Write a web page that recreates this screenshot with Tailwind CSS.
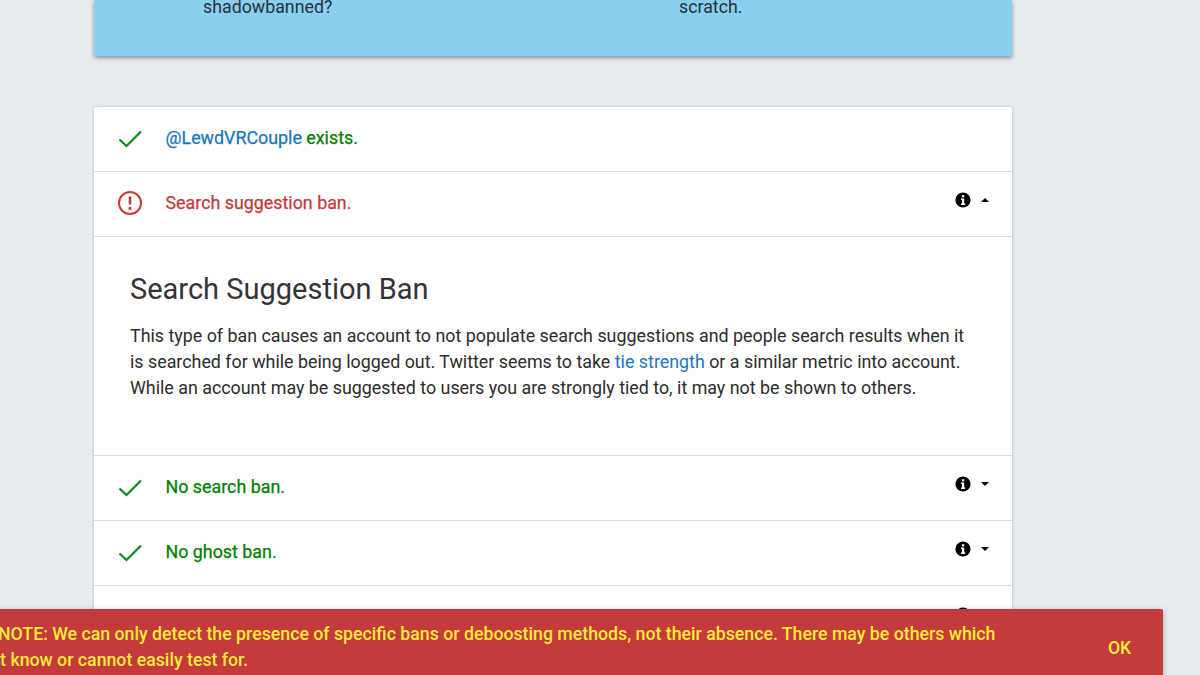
<!DOCTYPE html>
<html lang="en">
<head>
    <meta charset="UTF-8">
    <title>Shadowban Test</title>
    <script src="https://cdn.jsdelivr.net/npm/@tailwindcss/browser@4"></script>
</head>
<body class="relative h-[675px] w-[1200px] overflow-hidden bg-[#e6ebf0] font-['Roboto',sans-serif] text-[#2c2c2c]">
    <div class="ml-[94px] w-[918px]">
        <!-- Intro -->
        <div class="grid h-[56px] grid-cols-2 rounded-b-[2px] bg-[#89cff0] text-[17.8px] leading-[26px] text-[#263238] shadow-[0_2px_4px_rgba(0,0,0,0.4)]">
            <p class="-mt-[6px] pl-[109px]">shadowbanned?</p>
            <p class="-mt-[6px] pl-[126px]">scratch.</p>
        </div>

        <!-- Results -->
        <div class="mt-[51px] rounded-[2px] bg-white shadow-[0_0_3px_rgba(0,0,0,0.25)]">
            <!-- Exists -->
            <div class="flex h-[65px] items-center border-b border-[#dcdcdc] pb-[2px] pl-[24px] text-[17.85px] text-[#008000]">
                <svg class="mr-[23.5px] h-[24px] w-[24px]" viewBox="0 0 24 24" fill="none" stroke="#0a8a1f" stroke-width="2.2"><path d="M1.5 13.5 8.5 20 23 5.5"/></svg>
                <p class="[-webkit-text-stroke:0.25px_currentColor]"><span class="text-[#1b75bb]">@LewdVRCouple</span> exists.</p>
            </div>

            <!-- Search suggestion ban -->
            <div class="flex h-[65px] items-center border-b border-[#dcdcdc] pb-[2px] pl-[24px] pr-[22px] text-[17.85px] text-[#c53a3a]">
                <svg class="mr-[23.5px] h-[24px] w-[24px]" viewBox="0 0 24 24" fill="none" stroke="#c53a3a" stroke-width="2"><circle cx="12" cy="12" r="11"/><path stroke-width="2.6" d="M12 5.5v8"/><path stroke-width="2.8" d="M12 16v2.8"/></svg>
                <p class="[-webkit-text-stroke:0.25px_currentColor]">Search suggestion ban.</p>
                <div class="-mt-[6px] ml-auto flex items-center gap-[9px]">
                    <svg class="h-[16px] w-[16px]" viewBox="0 0 16 16"><circle cx="8" cy="8" r="7.6" fill="#000"/><rect x="6.9" y="3.2" width="2.3" height="2.2" fill="#fff"/><path fill="#fff" d="M6 6.6h3.2v5h1v1.3H6v-1.3h1v-3.7H6z"/></svg>
                    <svg class="h-[4px] w-[10px]" viewBox="0 0 10 4"><path d="M1 4 5 0l4 4z"/></svg>
                </div>
            </div>

            <!-- Search suggestion ban details -->
            <div class="h-[219px] border-b border-[#dcdcdc] px-[36px] pt-[33px]">
                <h2 class="text-[29px] leading-[38px] text-[#333]">Search Suggestion Ban</h2>
                <p class="mt-[15px] whitespace-nowrap text-[17.85px] leading-[26px] text-[#2c2c2c]">
                    This type of ban causes an account to not populate search suggestions and people search results when it<br>
                    is searched for while being logged out. Twitter seems to take <a class="text-[#1b75bb]">tie strength</a> or a similar metric into account.<br>
                    While an account may be suggested to users you are strongly tied to, it may not be shown to others.
                </p>
            </div>

            <!-- No search ban -->
            <div class="flex h-[65px] items-center border-b border-[#dcdcdc] pb-[2px] pl-[24px] pr-[22px] text-[17.85px] text-[#008000]">
                <svg class="mr-[23.5px] h-[24px] w-[24px]" viewBox="0 0 24 24" fill="none" stroke="#0a8a1f" stroke-width="2.2"><path d="M1.5 13.5 8.5 20 23 5.5"/></svg>
                <p class="[-webkit-text-stroke:0.25px_currentColor]">No search ban.</p>
                <div class="-mt-[6px] ml-auto flex items-center gap-[9px]">
                    <svg class="h-[16px] w-[16px]" viewBox="0 0 16 16"><circle cx="8" cy="8" r="7.6" fill="#000"/><rect x="6.9" y="3.2" width="2.3" height="2.2" fill="#fff"/><path fill="#fff" d="M6 6.6h3.2v5h1v1.3H6v-1.3h1v-3.7H6z"/></svg>
                    <svg class="h-[4px] w-[10px]" viewBox="0 0 10 4"><path d="M1 0h8L5 4z"/></svg>
                </div>
            </div>

            <!-- No ghost ban -->
            <div class="flex h-[65px] items-center border-b border-[#dcdcdc] pb-[2px] pl-[24px] pr-[22px] text-[17.85px] text-[#008000]">
                <svg class="mr-[23.5px] h-[24px] w-[24px]" viewBox="0 0 24 24" fill="none" stroke="#0a8a1f" stroke-width="2.2"><path d="M1.5 13.5 8.5 20 23 5.5"/></svg>
                <p class="[-webkit-text-stroke:0.25px_currentColor]">No ghost ban.</p>
                <div class="-mt-[6px] ml-auto flex items-center gap-[9px]">
                    <svg class="h-[16px] w-[16px]" viewBox="0 0 16 16"><circle cx="8" cy="8" r="7.6" fill="#000"/><rect x="6.9" y="3.2" width="2.3" height="2.2" fill="#fff"/><path fill="#fff" d="M6 6.6h3.2v5h1v1.3H6v-1.3h1v-3.7H6z"/></svg>
                    <svg class="h-[4px] w-[10px]" viewBox="0 0 10 4"><path d="M1 0h8L5 4z"/></svg>
                </div>
            </div>

            <!-- Next row, under the snackbar -->
            <div class="flex h-[65px] items-center pb-[2px] pl-[24px] pr-[22px]">
                <div class="-mt-[6px] ml-auto flex items-center gap-[9px]">
                    <svg class="h-[16px] w-[16px]" viewBox="0 0 16 16"><circle cx="8" cy="8" r="7.6" fill="#000"/></svg>
                    <svg class="h-[4px] w-[10px]" viewBox="0 0 10 4"><path d="M1 0h8L5 4z"/></svg>
                </div>
            </div>
        </div>
    </div>

    <!-- Snackbar -->
    <div class="absolute left-[-40px] top-[609px] flex h-[80px] w-[1203px] rounded-[2px] bg-[#c53a3a] pl-[40px] text-[17.73px] font-medium leading-[26px] text-[#ffeb3b] shadow-[0_2px_6px_rgba(0,0,0,0.3)]">
        <p class="w-[1060px] whitespace-nowrap pt-[12px] -indent-[2px]">
            NOTE: We can only detect the presence of specific bans or deboosting methods, not their absence. There may be others which<br>
            <span class="-ml-[59px] inline-block indent-0">we don't know or cannot easily test for.</span>
        </p>
        <button class="absolute left-[1148px] top-[26px] text-[17.6px] font-medium leading-[26px]">OK</button>
    </div>
</body>
</html>
